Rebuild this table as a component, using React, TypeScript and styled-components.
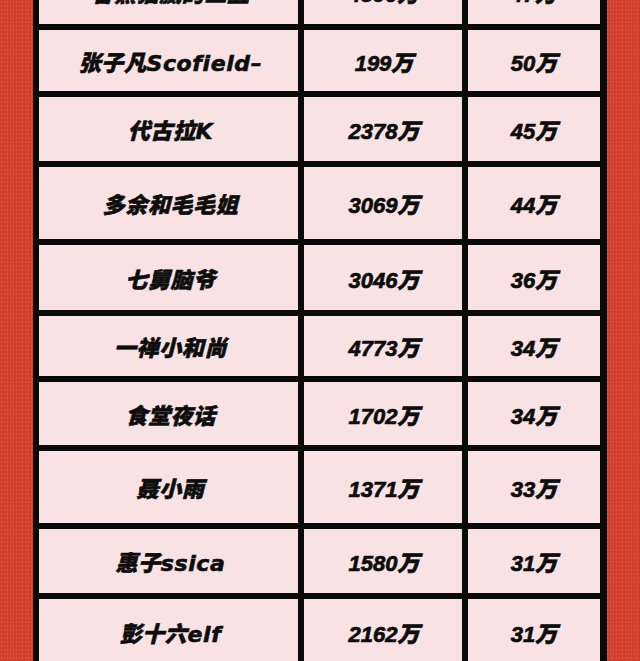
import React from 'react';
import styled, { createGlobalStyle } from 'styled-components';

type Entry = {
	name: string;
	fans: string;
	gain: string;
	h: number;
};

// first row is cut off by the top of the screenshot
const entries: Entry[] = [
	{ name: '香蕉猫腻的二丑', fans: '4590万', gain: '47万', h: 65 },
	{ name: '张子凡Scofield–', fans: '199万', gain: '50万', h: 61 },
	{ name: '代古拉K', fans: '2378万', gain: '45万', h: 64 },
	{ name: '多余和毛毛姐', fans: '3069万', gain: '44万', h: 72 },
	{ name: '七舅脑爷', fans: '3046万', gain: '36万', h: 65 },
	{ name: '一禅小和尚', fans: '4773万', gain: '34万', h: 60 },
	{ name: '食堂夜话', fans: '1702万', gain: '34万', h: 63 },
	{ name: '聂小雨', fans: '1371万', gain: '33万', h: 72 },
	{ name: '惠子ssica', fans: '1580万', gain: '31万', h: 64 },
	{ name: '彭十六elf', fans: '2162万', gain: '31万', h: 66 },
];

const GlobalStyle = createGlobalStyle`
	html, body {
		margin: 0;
		padding: 0;
		height: 661px;
		overflow: hidden;
	}
	body {
		background: #d3402e;
	}
`;

const Page = styled.div`
	width: 640px;
	height: 661px;
	box-sizing: border-box;
	padding: 0 33px;
	overflow: hidden;
	background-color: #d3402e;
	background-image:
		radial-gradient(rgba(250, 140, 110, 0.28) 0.6px, transparent 1px),
		radial-gradient(rgba(140, 20, 12, 0.22) 0.6px, transparent 1px),
		radial-gradient(rgba(235, 100, 75, 0.22) 0.7px, transparent 1.1px);
	background-size: 3px 4px, 5px 3px, 7px 5px;
	background-position: 0 0, 2px 1px, 3px 2px;
`;

const Table = styled.div`
	margin-top: -47px;
	display: flex;
	flex-direction: column;
	gap: 6px;
	padding: 6px 7px 6px 6px;
	background: #0a0a0a;
`;

const Row = styled.div<{ $h: number }>`
	display: grid;
	grid-template-columns: 259px 158px 132px;
	column-gap: 6px;
	height: ${(p) => p.$h}px;
`;

const Cell = styled.div<{ $num?: boolean; $dx?: number }>`
	display: flex;
	align-items: center;
	justify-content: center;
	background: #f8e2e4;
	color: #0d0d0d;
	font-family: ${(p) =>
		p.$num
			? '"Liberation Sans", "Noto Sans CJK SC", sans-serif'
			: '"DejaVu Sans", "Noto Sans CJK SC", sans-serif'};
	font-size: 22px;
	font-weight: 900;
	font-style: italic;
	letter-spacing: ${(p) => (p.$num ? '0' : '0.6px')};
	white-space: nowrap;
	padding-left: ${(p) => p.$dx ?? 0}px;
	-webkit-text-stroke: ${(p) => (p.$num ? '0.7px' : '0.6px')} #0d0d0d;
`;

export default function App() {
	return (
		<>
			<GlobalStyle />
			<Page>
				<Table>
					{entries.map((el, idx) => (
						<Row key={idx} $h={el.h}>
							<Cell $dx={4}>{el.name}</Cell>
							<Cell $num $dx={2}>{el.fans}</Cell>
							<Cell $num $dx={-10}>{el.gain}</Cell>
						</Row>
					))}
				</Table>
			</Page>
		</>
	);
}
